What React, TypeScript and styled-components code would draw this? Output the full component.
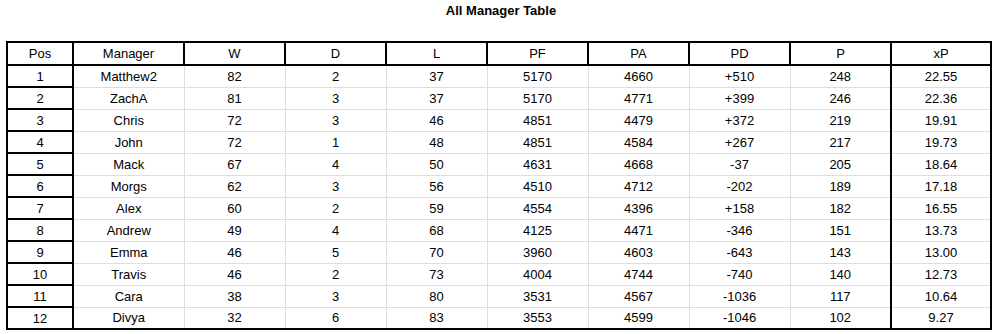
import React from 'react';
import styled, { createGlobalStyle } from 'styled-components';

const Global = createGlobalStyle`
  html, body { margin: 0; padding: 0; background: #fff; }
  body { font-family: "Liberation Sans", Arial, sans-serif; color: #000; }
`;

const Page = styled.div`
  width: 1002px;
  height: 334px;
  padding-top: 3px;
  box-sizing: border-box;
`;

const Title = styled.h1`
  margin: 0;
  font-size: 13px;
  line-height: 15px;
  font-weight: bold;
  text-align: center;
`;

const T = styled.table`
  margin: 23px 0 0 6px;
  width: 984px;
  table-layout: fixed;
  border-collapse: collapse;
  border: 2px solid #000;
  font-size: 13px;
`;

const Th = styled.th`
  height: 21px;
  padding: 0;
  font-weight: normal;
  text-align: center;
  border: 2px solid #000;
`;

const Td = styled.td<{ $strong?: boolean; $edge?: boolean }>`
  height: 20px;
  padding: 0;
  text-align: center;
  border: 1px solid #dedede;
  ${({ $strong }) => $strong && 'border: 2px solid #000;'}
  ${({ $edge }) => $edge && 'border-left: 2px solid #000; border-right: 2px solid #000;'}
`;

const cols = ['Pos', 'Manager', 'W', 'D', 'L', 'PF', 'PA', 'PD', 'P', 'xP'];
const widths = [66, 111, 101, 101, 101, 101, 101, 101, 101, 100];

const rows: (string | number)[][] = [
  [1, 'Matthew2', 82, 2, 37, 5170, 4660, '+510', 248, '22.55'],
  [2, 'ZachA', 81, 3, 37, 5170, 4771, '+399', 246, '22.36'],
  [3, 'Chris', 72, 3, 46, 4851, 4479, '+372', 219, '19.91'],
  [4, 'John', 72, 1, 48, 4851, 4584, '+267', 217, '19.73'],
  [5, 'Mack', 67, 4, 50, 4631, 4668, '-37', 205, '18.64'],
  [6, 'Morgs', 62, 3, 56, 4510, 4712, '-202', 189, '17.18'],
  [7, 'Alex', 60, 2, 59, 4554, 4396, '+158', 182, '16.55'],
  [8, 'Andrew', 49, 4, 68, 4125, 4471, '-346', 151, '13.73'],
  [9, 'Emma', 46, 5, 70, 3960, 4603, '-643', 143, '13.00'],
  [10, 'Travis', 46, 2, 73, 4004, 4744, '-740', 140, '12.73'],
  [11, 'Cara', 38, 3, 80, 3531, 4567, '-1036', 117, '10.64'],
  [12, 'Divya', 32, 6, 83, 3553, 4599, '-1046', 102, '9.27'],
];

export default function App() {
  return (
    <Page>
      <Global />
      <Title>All Manager Table</Title>
      <T>
        <colgroup>
          {widths.map((w, i) => <col key={i} style={{ width: w }} />)}
        </colgroup>
        <thead>
          <tr>{cols.map(c => <Th key={c}>{c}</Th>)}</tr>
        </thead>
        <tbody>
          {rows.map(r => (
            <tr key={r[0]}>
              {r.map((v, i) => (
                <Td key={i} $strong={i === 0} $edge={i === 9}>{v}</Td>
              ))}
            </tr>
          ))}
        </tbody>
      </T>
    </Page>
  );
}
